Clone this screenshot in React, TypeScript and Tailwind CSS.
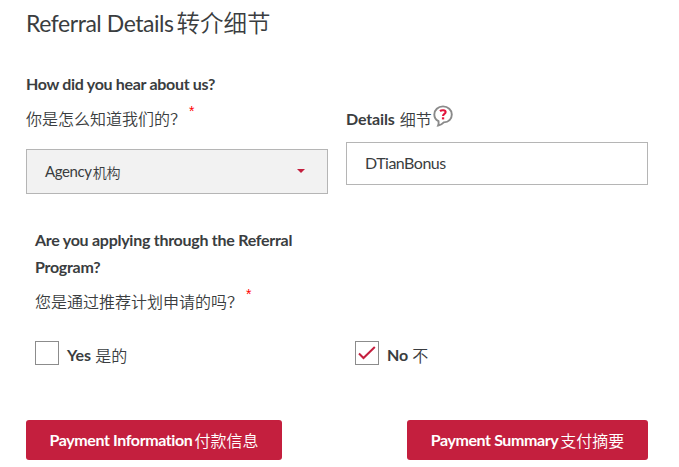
import type { ReactNode } from 'react'

function Zh({ children }: { children: ReactNode }) {
  return <span className="font-['Noto_Sans_CJK_SC',sans-serif] text-base font-[350] tracking-normal">{children}</span>
}

function Required() {
  return <span className="relative -top-[7px] ml-[3px] font-['Liberation_Sans',sans-serif] text-sm font-normal text-[#ff0000]">*</span>
}

function HelpIcon() {
  return (
    <svg width="20" height="22" viewBox="0 0 20 22" fill="none" className="ml-px">
      <path
        d="M5.5 16.2C2.8 14.8 1.3 12.4 1.3 9.5C1.3 4.8 5.1 1.4 10 1.4S18.8 4.8 18.8 9.4C18.8 14 15.6 17 10.8 17.4C9.3 19 7.4 20.2 5.1 20.6C5.7 19.2 5.8 17.7 5.5 16.2Z"
        stroke="#8a8a8a"
        strokeWidth="1.9"
      />
      <path d="M7 6.1C8.3 5 12.6 4.6 12.6 7.1C12.6 9 10 8.8 10 11" stroke="#e4143c" strokeWidth="2.1" />
      <path d="M8.9 12.3h2.3v2.1H8.9z" fill="#e4143c" />
    </svg>
  )
}

function CheckOption({ label, zh, checked = false }: { label: string; zh: string; checked?: boolean }) {
  return (
    <label className="flex w-80 items-start">
      <span className="flex size-6 items-center justify-center border border-[#8c8c8c] bg-white">
        {checked && (
          <svg width="18" height="14" viewBox="0 0 18 14" fill="none">
            <path d="M1 7.5L5.5 12L16.8 1" stroke="#c41f3e" strokeWidth="2" />
          </svg>
        )}
      </span>
      <span className="ml-2 flex h-7 items-center gap-1 font-bold">
        {label} <Zh>{zh}</Zh>
      </span>
    </label>
  )
}

export default function App() {
  return (
    <main className="h-[467px] w-[679px] overflow-hidden bg-white pl-[26px] font-['Lato','Noto_Sans_CJK_SC',sans-serif] text-base text-[#3a3d40]">
      <h1 className="flex h-[46px] items-center gap-[3px] text-[23.5px] whitespace-nowrap">
        <span className="text-[23px] tracking-[-0.45px]">Referral Details</span>
        <span className="font-['Noto_Sans_CJK_SC',sans-serif] font-[350]">转介细节</span>
      </h1>

      {/* Referral source */}
      <section className="flex gap-[18px] pt-6">
        <div className="w-[302px]">
          <p className="h-[27px] leading-[27px] font-bold tracking-[-0.31px] whitespace-nowrap">How did you hear about us?</p>
          <p className="flex h-[52px] items-center pb-[10px]">
            <Zh>你是怎么知道我们的？</Zh>
            <Required />
          </p>
          <button className="flex h-[45px] w-full items-center justify-between border border-[#b5b5b5] bg-[#f2f2f2] pr-[22px] pl-[18px]">
            <span className="flex items-center gap-px text-[15px] tracking-[-0.4px]">
              Agency
              <span className="font-['Noto_Sans_CJK_SC',sans-serif] text-sm font-[350] tracking-normal">机构</span>
            </span>
            <span className="mb-0.5 border-x-4 border-t-4 border-x-transparent border-t-[#c41f3e]" />
          </button>
        </div>
        <div className="w-[302px] pt-[35px]">
          <p className="flex h-[37px] items-start leading-[28px] font-bold">
            <span className="mr-[5px] tracking-[-0.15px]">Details</span>
            <span className="pt-px">
              <Zh>细节</Zh>
            </span>
            <HelpIcon />
          </p>
          <input
            className="h-[43px] w-full border border-[#b5b5b5] bg-white px-[18px] pb-0.5 tracking-[-0.5px] outline-none"
            defaultValue="DTianBonus"
          />
        </div>
      </section>

      {/* Referral program */}
      <section className="pt-8 pl-[9px]">
        <p className="leading-[27px] font-bold tracking-[-0.27px] whitespace-nowrap">
          Are you applying through the Referral
          <br />
          Program?
        </p>
        <p className="flex h-[41px] items-center">
          <Zh>您是通过推荐计划申请的吗？</Zh>
          <Required />
        </p>
        <div className="flex pt-5">
          <CheckOption label="Yes" zh="是的" />
          <CheckOption label="No" zh="不" checked />
        </div>
      </section>

      <div className="flex w-[622px] justify-between pt-[51px] font-bold whitespace-nowrap text-white">
        <button className="flex h-10 w-64 items-center justify-center gap-0.5 rounded-[3px] bg-[#c41f3e] pb-px">
          <span className="tracking-[-0.4px]">Payment Information</span>
          <Zh>付款信息</Zh>
        </button>
        <button className="flex h-10 w-[241px] items-center justify-center gap-0.5 rounded-[3px] bg-[#c41f3e] pb-px">
          <span className="tracking-[-0.4px]">Payment Summary</span>
          <Zh>支付摘要</Zh>
        </button>
      </div>
    </main>
  )
}
